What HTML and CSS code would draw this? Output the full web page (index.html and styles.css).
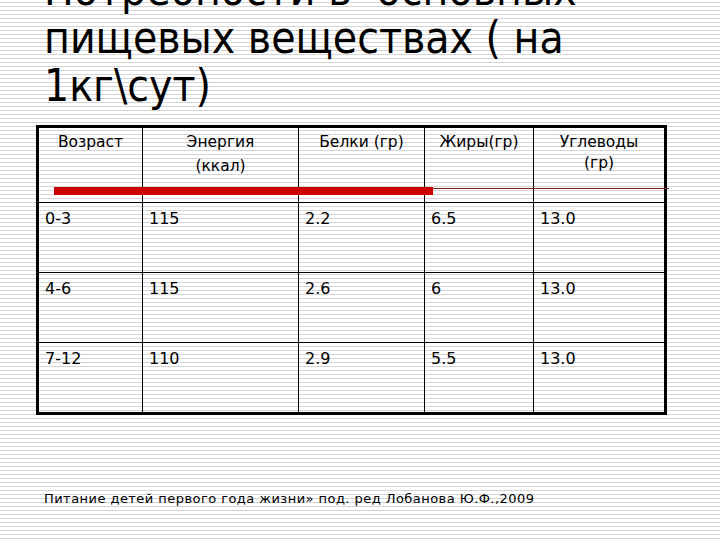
FILE: index.html
```html
<!DOCTYPE html>
<html lang="ru">
<head>
<meta charset="utf-8">
<title>Потребности в основных пищевых веществах</title>
<link rel="stylesheet" href="styles.css">
</head>
<body>
<div class="slide">
  <h1 class="title">Потребности в&nbsp; основных<br>пищевых веществах ( на<br>1кг\сут)</h1>
  <div class="table-wrap">
    <table class="grid">
      <colgroup>
        <col class="c1"><col class="c2"><col class="c3"><col class="c4"><col class="c5">
      </colgroup>
      <thead>
        <tr>
          <th>Возраст</th>
          <th>Энергия<br><span class="sub">(ккал)</span></th>
          <th>Белки (гр)</th>
          <th>Жиры(гр)</th>
          <th>Углеводы<br>(гр)</th>
        </tr>
      </thead>
      <tbody>
        <tr><td>0-3</td><td>115</td><td>2.2</td><td>6.5</td><td>13.0</td></tr>
        <tr><td>4-6</td><td>115</td><td>2.6</td><td>6</td><td>13.0</td></tr>
        <tr><td>7-12</td><td>110</td><td>2.9</td><td>5.5</td><td>13.0</td></tr>
      </tbody>
    </table>
    <div class="red-bar"></div>
    <div class="red-line"></div>
  </div>
  <p class="source">Питание детей первого года жизни» под. ред Лобанова Ю.Ф.,2009</p>
</div>
</body>
</html>
```

FILE: styles.css
```css
html, body {
  margin: 0;
  padding: 0;
}
body {
  width: 720px;
  height: 540px;
  overflow: hidden;
  background-color: #ffffff;
  background-image: repeating-linear-gradient(to bottom, #ffffff 0px, #ffffff 2px, #d4d4d4 2px, #d4d4d4 3px, #ffffff 3px, #ffffff 4px);
  font-family: "DejaVu Sans", Verdana, sans-serif;
  color: #000;
}
.slide {
  display: flex;
  flex-direction: column;
}
.title {
  margin: -34px 0 0 44px;
  font-family: "DejaVu Sans Condensed", "DejaVu Sans", sans-serif;
  font-weight: normal;
  font-size: 44px;
  line-height: 48px;
  color: #000;
}
.table-wrap {
  position: relative;
  margin: 15px 0 0 36px;
  width: 628px;
}
.grid {
  table-layout: fixed;
  border-collapse: collapse;
  width: 628px;
  border: 3px solid #000;
}
.c1 { width: 105px; }
.c2 { width: 156px; }
.c3 { width: 126px; }
.c4 { width: 109px; }
.c5 { width: 132px; }
.grid th, .grid td {
  border: 1px solid #000;
  vertical-align: top;
  padding: 0;
}
.grid th {
  height: 70px;
  font-family: "DejaVu Sans", sans-serif;
  font-weight: normal;
  font-size: 15.5px;
  line-height: 21px;
  text-align: center;
  padding-top: 4px;
}
.grid th .sub {
  display: inline-block;
  margin-top: 3px;
}
.grid td {
  height: 63px;
  font-size: 16px;
  line-height: 20px;
  padding: 6px 0 0 6px;
}
.red-bar {
  position: absolute;
  left: 18px;
  top: 62px;
  width: 379px;
  height: 8px;
  background: #cc0000;
}
.red-line {
  position: absolute;
  left: 397px;
  top: 63px;
  width: 236px;
  height: 1px;
  background: #7a2020;
}
.source {
  margin: 76px 0 0 44px;
  font-family: "DejaVu Sans", sans-serif;
  font-size: 13px;
  letter-spacing: 0.45px;
  line-height: 16px;
}
```
